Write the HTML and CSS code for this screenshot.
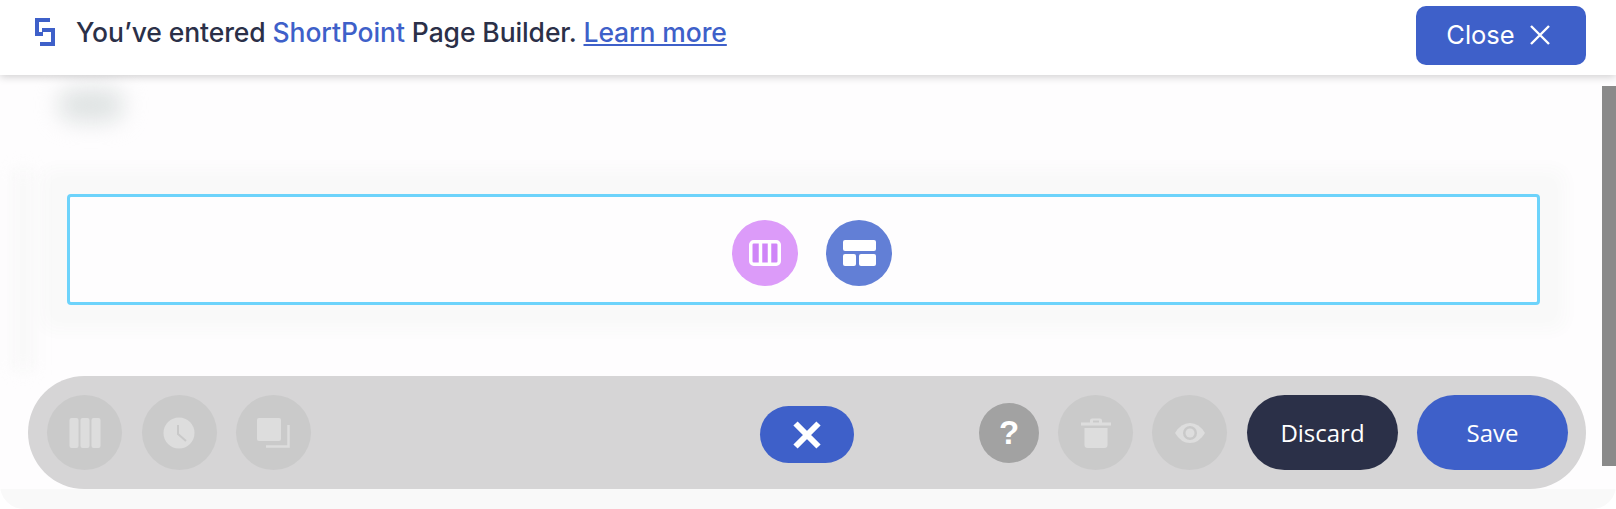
FILE: index.html
```html
<!DOCTYPE html>
<html lang="en">
<head>
    <meta charset="UTF-8">
    <meta name="viewport" content="width=device-width, initial-scale=1.0">
    <title>ShortPoint Page Builder</title>
    <link rel="stylesheet" href="styles.css">
</head>
<body>
    <div class="page">
        <header class="topbar">
            <div class="notice">
                <svg class="logo" width="20" height="28" viewBox="0 0 20 28">
                    <path d="M0 0h15v4H4v10h4v4H0z" fill="#3e60c9"/>
                    <path d="M20 28H5v-4h11V14H7v-4h13z" fill="#3e60c9"/>
                </svg>
                <span>You’ve entered <span class="brand">ShortPoint</span> Page Builder. <a class="learn" href="#">Learn more</a></span>
            </div>
            <button class="close-btn">
                Close
                <svg width="22" height="22" viewBox="0 0 22 22">
                    <path d="M2 2l18 18M20 2L2 20" stroke="#fff" stroke-width="2.400" fill="none"/>
                </svg>
            </button>
        </header>

        <main class="canvas">
            <div class="blob-row">
                <div class="blob"></div>
            </div>

            <section class="halo">
                <div class="drop-box">
                    <button class="add-btn pink">
                        <svg width="32" height="26" viewBox="0 0 32 26">
                            <rect x="1.750" y="1.750" width="28.500" height="22.500" rx="3" fill="#cf85f8" stroke="#fff" stroke-width="3.500"/>
                            <path d="M11.500 2v22M20.500 2v22" stroke="#fff" stroke-width="3.500"/>
                        </svg>
                    </button>
                    <button class="add-btn indigo">
                        <svg width="33" height="26" viewBox="0 0 33 26">
                            <rect x="0" y="0" width="33" height="11" rx="2" fill="#fff"/>
                            <rect x="0" y="14" width="13" height="12" rx="2" fill="#fff"/>
                            <rect x="16" y="14" width="17" height="12" rx="2" fill="#fff"/>
                        </svg>
                    </button>
                </div>
            </section>

            <div class="toolbar">
                <div class="tool-group">
                    <button class="tool">
                        <svg width="32" height="30" viewBox="0 0 32 30" fill="#dddddd">
                            <rect x="0.500" y="0" width="9" height="30" rx="2"/>
                            <rect x="11.500" y="0" width="9" height="30" rx="2"/>
                            <rect x="22.500" y="0" width="9" height="30" rx="2"/>
                        </svg>
                    </button>
                    <button class="tool">
                        <svg width="32" height="32" viewBox="0 0 32 32">
                            <circle cx="16" cy="16" r="15.500" fill="#dddddd"/>
                            <path d="M15 8v9l8 7" stroke="#c9c9c9" stroke-width="2" fill="none"/>
                        </svg>
                    </button>
                    <button class="tool">
                        <svg width="33" height="30" viewBox="0 0 33 30" fill="none">
                            <rect x="0" y="0" width="24" height="23" rx="2" fill="#dddddd"/>
                            <path d="M31.500 7v21.500H9" stroke="#dddddd" stroke-width="2.500"/>
                        </svg>
                    </button>
                </div>

                <button class="cancel-pill">
                    <svg width="30" height="30" viewBox="0 0 30 30">
                        <path d="M3.500 3.500l23 23M26.500 3.500l-23 23" stroke="#fff" stroke-width="6" fill="none"/>
                    </svg>
                </button>

                <div class="tool-group end">
                    <button class="help">?</button>
                    <button class="tool">
                        <svg width="32" height="32" viewBox="0 0 32 32" fill="#dddddd">
                            <path d="M10 3.500q0-2 2-2h8q2 0 2 2v2h9v3H1v-3h9zM13 3.500v2h6v-2z" fill-rule="evenodd"/>
                            <path d="M4.500 11h23v17q0 3-3 3h-17q-3 0-3-3z"/>
                        </svg>
                    </button>
                    <button class="tool">
                        <svg width="32" height="32" viewBox="0 0 32 32">
                            <path d="M1 16q6-10 15-10t15 10q-6 10-15 10T1 16z" fill="#dddddd"/>
                            <circle cx="16" cy="16" r="7" fill="#c9c9c9"/>
                            <circle cx="16" cy="16" r="4.500" fill="#dddddd"/>
                        </svg>
                    </button>
                    <button class="action dark">Discard</button>
                    <button class="action blue">Save</button>
                </div>
            </div>

            <div class="canvas-foot"></div>
        </main>

        <!-- blurred page content showing through, and the preview scrollbar -->
        <div class="side-blur"></div>
        <div class="scroll-thumb"></div>
    </div>
</body>
</html>
```

FILE: styles.css
```css
body {
    margin: 0;
    background-color: white;
    overflow: hidden;
}
button {
    border: none;
    padding: 0;
    cursor: pointer;
}
.page {
    position: relative;
    display: flex;
    flex-direction: column;
    height: 509px;
    overflow: hidden;
    border-radius: 0 0 24px 24px;
    background-color: #fefdfe;
}
.topbar {
    position: relative;
    z-index: 2;
    flex: none;
    display: flex;
    align-items: flex-start;
    justify-content: space-between;
    height: 75px;
    box-sizing: border-box;
    padding: 6px 30px 0 35px;
    background-color: white;
    box-shadow: 0 2px 8px rgba(0, 0, 0, 0.18);
}
.notice {
    display: flex;
    align-items: center;
    gap: 21px;
    margin-top: 12px;
    height: 28px;
    font-family: Inter, sans-serif;
    font-size: 26.500px;
    font-weight: 500;
    color: #2b3048;
    letter-spacing: -0.1px;
}
.logo { flex: none; }
.brand { color: #3e60c9; }
.learn { color: #3e60c9; }
.close-btn {
    display: flex;
    align-items: center;
    justify-content: center;
    gap: 14px;
    width: 170px;
    height: 59px;
    padding: 0 5px 2px 0;
    border-radius: 10px;
    background-color: #3e60c9;
    color: white;
    font-family: Inter, sans-serif;
    font-size: 25.500px;
}
.canvas {
    flex: 1;
    display: flex;
    flex-direction: column;
    min-height: 0;
}
.blob-row {
    flex: none;
    height: 85px;
    padding: 13px 0 0 58px;
    box-sizing: border-box;
}
.blob {
    width: 66px;
    height: 34px;
    border-radius: 17px;
    background-color: #dfe3e3;
    filter: blur(11px);
}
.halo {
    flex: none;
    margin: 0 76px 71px 67px;
    padding-top: 34px;
}
.drop-box {
    display: flex;
    align-items: center;
    justify-content: center;
    gap: 28px;
    height: 111px;
    box-sizing: border-box;
    padding: 7px 0 0 17px;
    border: 3px solid #6dd3fb;
    border-radius: 4px;
    background-color: #fefdfe;
    box-shadow: 0 0 16px 26px #f9f9f9;
}
.add-btn {
    display: flex;
    align-items: center;
    justify-content: center;
    width: 66px;
    height: 66px;
    border-radius: 50%;
}
.pink { background-color: #dc9bf9; }
.indigo { background-color: #627fd6; }
.toolbar {
    flex: none;
    display: grid;
    grid-template-columns: 1fr auto 1fr;
    align-items: center;
    width: 1558px;
    height: 113px;
    box-sizing: border-box;
    margin-left: 28px;
    padding: 0 18px 0 19px;
    border-radius: 57px;
    background-color: #d6d5d6;
}
.tool-group {
    display: flex;
    align-items: center;
    gap: 19.500px;
}
.tool-group.end {
    justify-content: flex-end;
    gap: 19px;
}
.tool {
    display: flex;
    align-items: center;
    justify-content: center;
    width: 75px;
    height: 75px;
    border-radius: 50%;
    background-color: #cacaca;
}
.cancel-pill {
    display: flex;
    align-items: center;
    justify-content: center;
    width: 94px;
    height: 57px;
    margin: 4px 1px 0 0;
    border-radius: 29px;
    background-color: #3e60c9;
}
.help {
    width: 60px;
    height: 60px;
    border-radius: 50%;
    background-color: #a2a2a2;
    color: white;
    font-family: "Liberation Sans", sans-serif;
    font-size: 33px;
    font-weight: bold;
}
.action {
    width: 151px;
    height: 75px;
    border-radius: 38px;
    color: white;
    font-family: "Open Sans", sans-serif;
    font-size: 24px;
}
.dark {
    margin-left: 1px;
    background-color: #2b3048;
}
.blue { background-color: #3e60c9; }
.canvas-foot {
    flex: 1;
    background-color: #f9f9f9;
}
.side-blur {
    position: absolute;
    top: 170px;
    left: 12px;
    width: 22px;
    height: 200px;
    background-color: #f8f8f8;
    filter: blur(8px);
}
.scroll-thumb {
    position: absolute;
    top: 86px;
    right: 0;
    width: 14px;
    height: 380px;
    background-color: #8a8a8a;
}
```
